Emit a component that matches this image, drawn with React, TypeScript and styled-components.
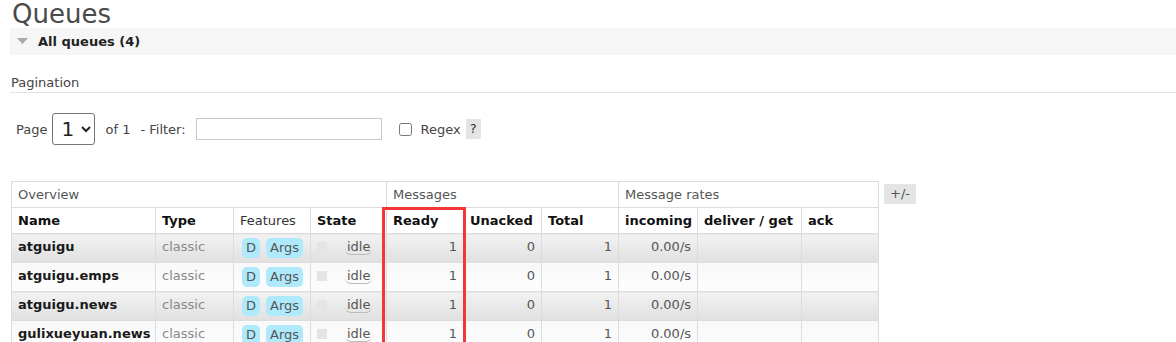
import styled, { createGlobalStyle } from "styled-components";

const GlobalStyle = createGlobalStyle`
  body {
    margin: 0;
    background: #fff;
    font-family: "DejaVu Sans", Verdana, sans-serif;
    font-size: 13px;
    color: #444;
  }
`;

const Page = styled.div`
  padding-left: 10px;
`;

const Title = styled.h1`
  margin: 0;
  padding-left: 2px;
  font-size: 26px;
  line-height: 28px;
  font-weight: normal;
  color: #4a4a4a;
`;

const SectionBar = styled.div`
  display: flex;
  align-items: center;
  gap: 10px;
  height: 27px;
  padding-left: 7px;
  background: #f6f6f6;
  font-weight: bold;
  color: #222;
`;

const SubTitle = styled.div`
  margin-top: 18px;
  height: 19px;
  line-height: 19px;
  padding-left: 1px;
  border-bottom: 1px solid #e4e4e4;
  color: #444;
`;

const PagerRow = styled.div`
  display: flex;
  align-items: center;
  height: 32px;
  margin-top: 20px;
  padding-left: 6px;
  color: #444;
`;

const Label = styled.span<{ $gap?: number }>`
  margin-left: ${(p) => p.$gap ?? 0}px;
`;

const PageSelect = styled.select`
  margin-left: 5px;
  width: 43px;
  height: 32px;
  font-family: "DejaVu Sans", Verdana, sans-serif;
  font-size: 20px;
  color: #222;
  border: 1px solid #767676;
  border-radius: 3px;
  background: #fff;
  padding: 0 0 0 4px;
`;

const FilterInput = styled.input`
  margin-left: 10px;
  width: 186px;
  height: 22px;
  box-sizing: border-box;
  border: 1px solid #c8c8c8;
  background: #fff;
`;

const Check = styled.input`
  margin: 0 0 0 17px;
  width: 13px;
  height: 13px;
`;

const Help = styled.span`
  margin-left: 5px;
  width: 15px;
  height: 20px;
  line-height: 20px;
  text-align: center;
  background: #e4e4e4;
  color: #333;
`;

const TableRow = styled.div`
  display: flex;
  align-items: flex-start;
  gap: 5px;
  margin-top: 36px;
  margin-left: 1px;
`;

const TableWrap = styled.div`
  position: relative;
`;

const Table = styled.table`
  width: 867px;
  table-layout: fixed;
  border-collapse: collapse;
  border: 1px solid #e0e0e0;
`;

const GroupCell = styled.th`
  height: 25px;
  padding: 0 6px;
  text-align: left;
  font-weight: normal;
  color: #555;
  border: 1px solid #dcdcdc;
  background: #fff;
`;

const HeadCell = styled.th<{ $plain?: boolean }>`
  height: 25px;
  padding: 0 6px;
  text-align: left;
  white-space: nowrap;
  font-weight: ${(p) => (p.$plain ? "normal" : "bold")};
  color: ${(p) => (p.$plain ? "#333" : "#111")};
  border: 1px solid #dcdcdc;
  background: #fff;
`;

const Row = styled.tr<{ $alt: boolean }>`
  td {
    background: ${(p) =>
      p.$alt
        ? "linear-gradient(#f2f2f2, #e0e0e0)"
        : "linear-gradient(#f8f8f8, #fdfdfd)"};
  }
`;

const Cell = styled.td<{ $num?: boolean; $tone?: string; $bold?: boolean }>`
  height: 25px;
  padding: 0 6px 3px;
  white-space: nowrap;
  text-align: ${(p) => (p.$num ? "right" : "left")};
  font-weight: ${(p) => (p.$bold ? "bold" : "normal")};
  color: ${(p) => p.$tone ?? "#555"};
  border: 1px solid #dcdcdc;
  vertical-align: middle;
`;

const Badges = styled.div`
  display: flex;
  gap: 6px;
  padding-left: 2px;
  margin-top: 3px;
`;

const Badge = styled.span`
  height: 20px;
  line-height: 20px;
  padding: 0 4px;
  border-radius: 5px;
  background: #aeeafb;
  color: #555;
`;

const StateBox = styled.div`
  display: flex;
  align-items: center;
  gap: 18px;
`;

const Square = styled.span`
  width: 10px;
  height: 10px;
  background: #e4e4e4;
`;

const Idle = styled.span`
  padding: 0 2px;
  border-bottom: 1px solid #bbb;
  border-radius: 0 0 6px 6px;
  color: #555;
`;

const Highlight = styled.div`
  position: absolute;
  left: 371px;
  top: 26px;
  width: 84px;
  height: 140px;
  box-sizing: border-box;
  border: 3px solid #f0383b;
  pointer-events: none;
`;

const ToggleButton = styled.span`
  margin-top: 3px;
  width: 32px;
  height: 20px;
  line-height: 20px;
  text-align: center;
  background: #e4e4e4;
  color: #555;
`;

const widths = [144, 78, 77, 76, 77, 78, 77, 79, 104, 77];

const queues = ["atguigu", "atguigu.emps", "atguigu.news", "gulixueyuan.news"];

export default function App() {
  return (
    <Page>
      <GlobalStyle />
      <Title>Queues</Title>
      <SectionBar>
        <svg width="11" height="7" viewBox="0 0 11 7">
          <polygon points="0,0 11,0 5.5,6" fill="#aaa" />
        </svg>
        All queues (4)
      </SectionBar>
      <SubTitle>Pagination</SubTitle>
      <PagerRow>
        <Label>Page</Label>
        <PageSelect defaultValue="1">
          <option value="1">1</option>
        </PageSelect>
        <Label $gap={10}>of 1</Label>
        <Label $gap={10}>- Filter:</Label>
        <FilterInput type="text" />
        <Check type="checkbox" />
        <Label $gap={9}>Regex</Label>
        <Help>?</Help>
      </PagerRow>
      <TableRow>
        <TableWrap>
          <Table>
            <colgroup>
              {widths.map((w, i) => (
                <col key={i} style={{ width: w }} />
              ))}
            </colgroup>
            <thead>
              <tr>
                <GroupCell colSpan={4}>Overview</GroupCell>
                <GroupCell colSpan={3}>Messages</GroupCell>
                <GroupCell colSpan={3}>Message rates</GroupCell>
              </tr>
              <tr>
                <HeadCell>Name</HeadCell>
                <HeadCell>Type</HeadCell>
                <HeadCell $plain>Features</HeadCell>
                <HeadCell>State</HeadCell>
                <HeadCell>Ready</HeadCell>
                <HeadCell>Unacked</HeadCell>
                <HeadCell>Total</HeadCell>
                <HeadCell>incoming</HeadCell>
                <HeadCell>deliver / get</HeadCell>
                <HeadCell>ack</HeadCell>
              </tr>
            </thead>
            <tbody>
              {queues.map((name, i) => (
                <Row key={name} $alt={i % 2 === 0}>
                  <Cell $bold $tone="#1a1a1a">{name}</Cell>
                  <Cell $tone="#888">classic</Cell>
                  <Cell>
                    <Badges>
                      <Badge>D</Badge>
                      <Badge>Args</Badge>
                    </Badges>
                  </Cell>
                  <Cell>
                    <StateBox>
                      <Square />
                      <Idle>idle</Idle>
                    </StateBox>
                  </Cell>
                  <Cell $num>1</Cell>
                  <Cell $num>0</Cell>
                  <Cell $num>1</Cell>
                  <Cell $num>0.00/s</Cell>
                  <Cell />
                  <Cell />
                </Row>
              ))}
            </tbody>
          </Table>
          <Highlight />
        </TableWrap>
        <ToggleButton>+/-</ToggleButton>
      </TableRow>
    </Page>
  );
}
